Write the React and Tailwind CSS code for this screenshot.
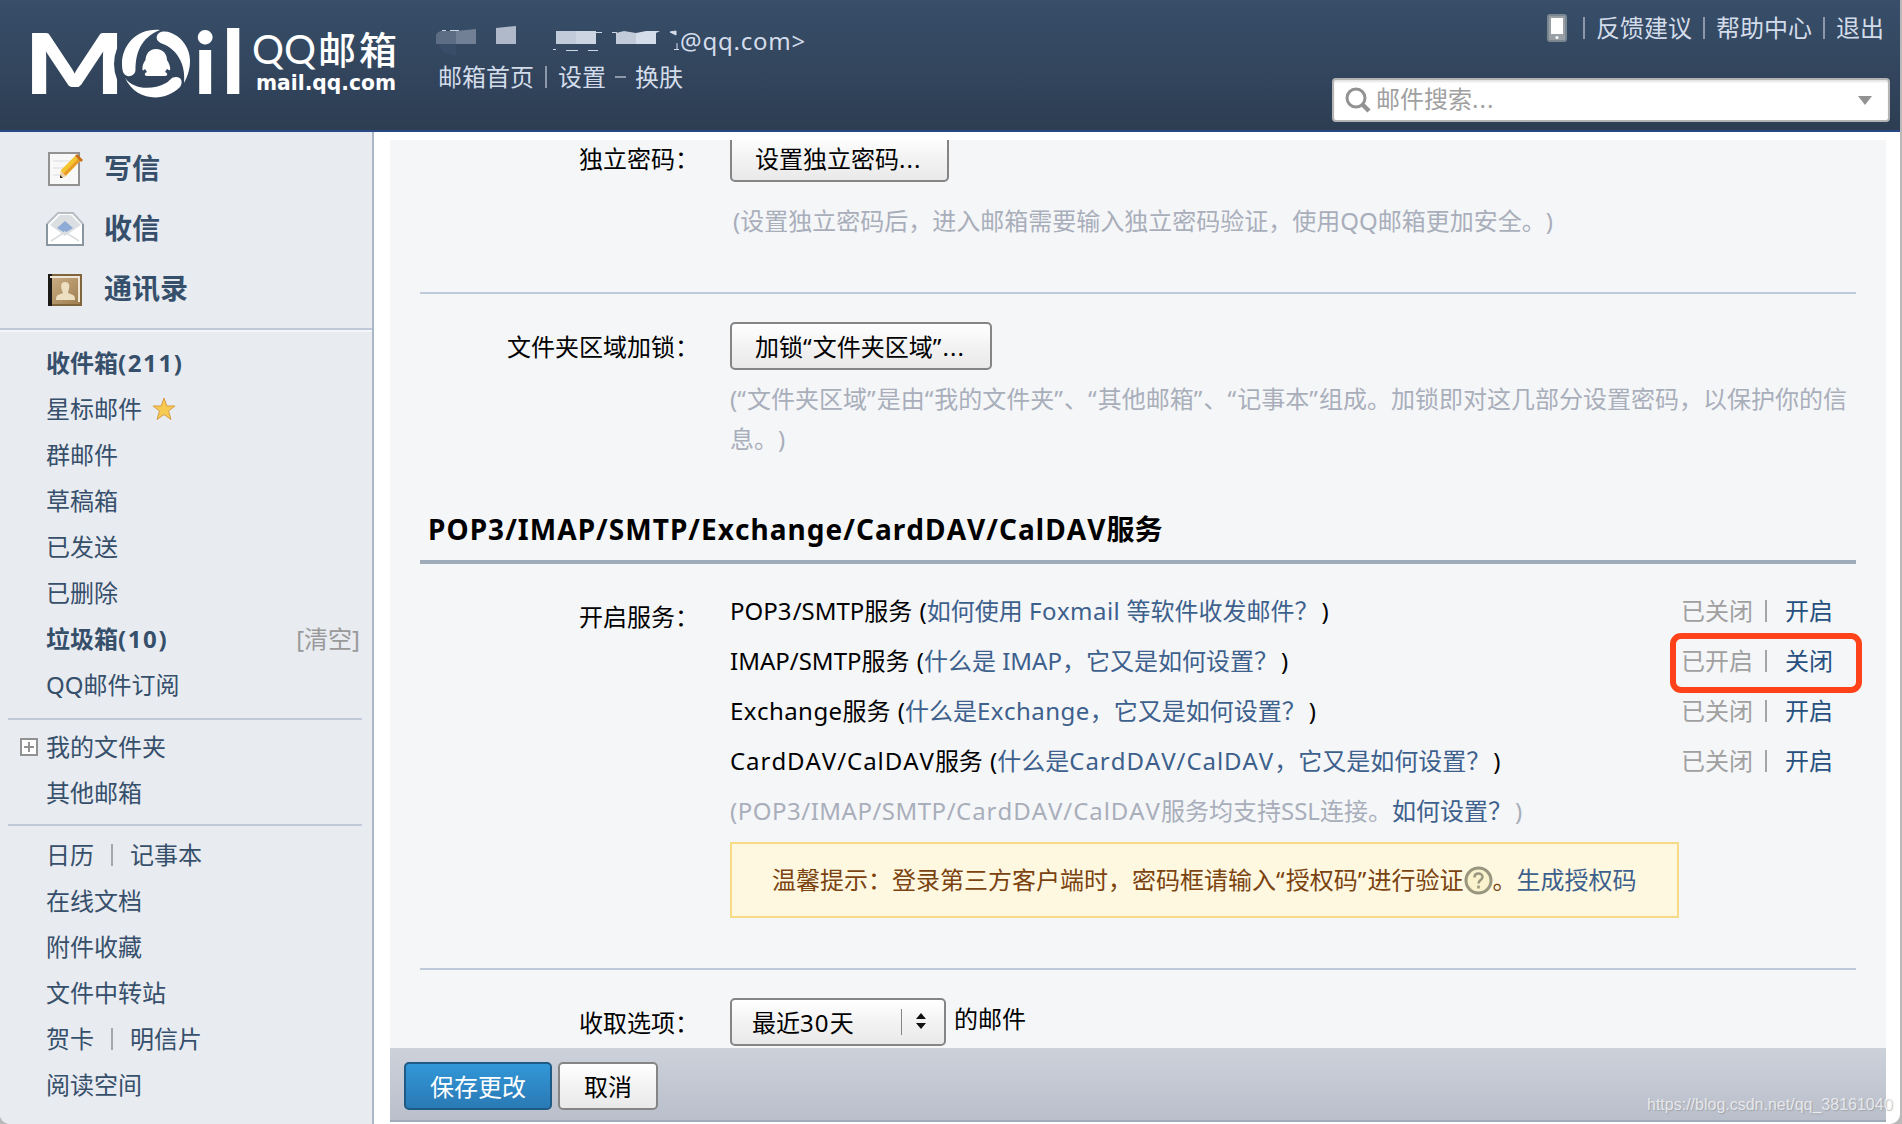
import { Fragment } from 'react';

const FONT = 'font-["Noto_Sans","Noto_Sans_CJK_SC",sans-serif] [font-kerning:none] [text-spacing-trim:space-all]';
const BTN = 'h-12 flex-none box-border flex items-center pt-0.5 border-2 border-[#858585] rounded-[5px] bg-linear-to-b from-white via-[#f3f3f3] via-50% to-[#e9e9e9] text-black whitespace-pre';

const SERVICES = [
  { name: 'POP3/SMTP服务', link: '如何使用 Foxmail 等软件收发邮件？', on: false },
  { name: 'IMAP/SMTP服务', link: '什么是 IMAP，它又是如何设置？', on: true },
  { name: 'Exchange服务', link: '什么是Exchange，它又是如何设置？', on: false },
  { name: 'CardDAV/CalDAV服务', link: '什么是CardDAV/CalDAV，它又是如何设置？', on: false },
];

// opens up latin runs and punctuation a little, leaves the Chinese glyphs on their grid
const T = ({ children }) => children.split(/([.“”0-9]+|CardDAV\/CalDAV|Exchange|Foxmail)/).map((s, i) => {
  if (/^[.“”0-9]/.test(s)) return <span key={i} className="tracking-[1.1px]">{s}</span>;
  if (s === 'CardDAV/CalDAV') return <span key={i} className="tracking-[0.95px]">{s}</span>;
  if (s === 'Exchange' || s === 'Foxmail') return <span key={i} className="tracking-[0.45px]">{s}</span>;
  return <Fragment key={i}>{s}</Fragment>;
});

const Logo = () => (
  <svg className="block flex-none" width="410" height="130" viewBox="0 0 410 130" fill="#fff">
    <defs>
      <mask id="cut">
        <rect width="410" height="130" fill="#fff"/>
        <circle cx="156" cy="64" r="42" fill="#000"/>
      </mask>
    </defs>
    <g mask="url(#cut)">
      <text x="0" y="0" transform="translate(24 94) scale(1.280 1)" fontFamily="Lato" fontWeight="900" fontSize="83">M</text>
    </g>
    <path d="M160 30C137 28 122 45 122 64C122 68 122.500 71 123.500 73C126 78 135 77 135.500 70C135.500 54 140 38 160 30Z"/>
    <path d="M159 33C164 30 171 32 177 36C193 48 193 67 184 83C186 63 176 49 163 44C156 42 155 36 159 33Z"/>
    <path d="M125 78C133 89 151 91 166 83C171 80 171 77 176 77C182 77 183 83 180 87C164 103 136 101 125 78Z"/>
    <path d="M156 49C163 49 167 54 167 60C169 63 171 68 170 70C169 71 168 69 167 69L165 72C168 73 168 76 165 76H147C144 76 144 73 147 72L145 69C144 70 143 71 142.500 70C142 67 143 63 145.500 60C146 54 149 49 156 49Z"/>
    <text x="194" y="94" fontFamily="Lato" fontWeight="900" fontSize="86">i</text>
    <text x="222" y="94" fontFamily="Lato" fontWeight="900" fontSize="88">l</text>
    <text x="252" y="64" fontFamily="Lato" fontSize="40" textLength="64" lengthAdjust="spacingAndGlyphs">QQ</text>
    <text x="318" y="64" fontFamily="Noto Sans CJK SC" fontWeight="500" fontSize="38" textLength="79">邮箱</text>
    <text x="256" y="90" fontFamily="DejaVu Sans" fontWeight="700" fontSize="22" textLength="140" lengthAdjust="spacingAndGlyphs">mail.qq.com</text>
  </svg>
);

// blurred-out nickname and account number
const HiddenName = () => (
  <svg className="block flex-none" width="243" height="40" viewBox="0 0 243 40">
    <path d="M0 10Q1 7 5 6H20V19H0V10Z" fill="#5d6d84"/>
    <path d="M20 6L40 4V19H20Z" fill="#718094"/>
    <path d="M2 19H20V31L8 28Z" fill="#3a4d68"/>
    <path d="M60 3L80 1V19H60Z" fill="#afb9c9"/>
    <path d="M120 6H140V19H120Z" fill="#c2cbd9"/>
    <path d="M140 6H160V19H140Z" fill="#cdd4e2"/>
    <path d="M6 5.500H10M14 5.500H23M160 7.500H166M117 24.500H120M130 25.500H142M152 25.500H162M176 7.500H181" stroke="#cdd4e2" strokeWidth="1"/>
    <path d="M180 8L188 6L200 8V19H180Z" fill="#c2cbd9"/>
    <path d="M200 8L210 6H224L220 8V19H200Z" fill="#d5dcea"/>
    <path d="M234 7L240 6V10ZM238 24.500H243M241 18V24" stroke="#d5dcea" fill="#d5dcea" strokeWidth="1"/>
  </svg>
);

const ComposeIcon = () => (
  <svg width="38" height="36" viewBox="0 0 38 36">
    <rect x="3" y="3" width="30" height="32" fill="#f8f8f8" stroke="#929292" strokeWidth="2"/>
    <path d="M7 11H25M7 18H21M7 25H18" stroke="#d8dbdf" strokeWidth="1"/>
    <path d="M14 28L15 20L29 6L34 11L20 26Z" fill="#f4c531"/>
    <path d="M19 26L34 11L32 9L17 24Z" fill="#ea9928"/>
    <path d="M14 28L15 21L20 26Z" fill="#ecd0ae"/>
    <path d="M14 28V25L17 28Z" fill="#352a20"/>
    <path d="M31 4L37 10L35 12L29 6Z" fill="#c66e13"/>
  </svg>
);

const InboxIcon = () => (
  <svg className="mt-0.5" width="38" height="36" viewBox="0 0 38 36">
    <path d="M1 13L12 2H27L37 13V34H1Z" fill="#fff" stroke="#b9bec5" strokeWidth="2"/>
    <path d="M1 13V34H37V13" fill="none" stroke="#89959f" strokeWidth="2"/>
    <path d="M4 14L14 4H25L35 14L19 25Z" fill="#dcdfe1"/>
    <path d="M11 17L19 10L27 17L19 22Z" fill="#8eabd5"/>
    <path d="M5 30L19 21L33 30" fill="none" stroke="#dadde0" strokeWidth="1.500"/>
  </svg>
);

const ContactsIcon = () => (
  <svg className="mt-1" width="36" height="34" viewBox="0 0 36 34">
    <defs>
      <linearGradient id="book" x1="0" y1="0" x2="1" y2="1">
        <stop offset="0" stopColor="#cfb188"/>
        <stop offset="1" stopColor="#9c7c4e"/>
      </linearGradient>
    </defs>
    <rect x="2" y="2" width="32" height="30" fill="url(#book)" stroke="#80653d" strokeWidth="2"/>
    <rect x="1" y="1" width="4" height="32" fill="#1b1a18"/>
    <path d="M3 4H32V29" fill="none" stroke="#efe6d8" strokeWidth="2"/>
    <path d="M18 9C22 9 23 12 22 16C21.500 18 21 19 21 20L26 22C28 23 28 25 28 27H9C9 25 9 23 11 22L16 20C16 19 15 18 14.500 16C13.500 12 14.500 9 18 9Z" fill="#ecdfc2"/>
  </svg>
);

const Folder = ({ children, bold, right }) => (
  <div className={`h-[46px] pl-[46px] pr-3 flex items-center justify-between whitespace-pre ${bold ? 'font-bold' : ''}`}>
    <span className="flex items-center">{children}</span>
    {right && <span className="font-normal text-[#9a9a9a]">{right}</span>}
  </div>
);

const Pair = ({ a, b }) => (
  <Folder>{a}<span className="w-[36px] flex justify-center"><i className="w-0.5 h-[22px] bg-[#a5a7aa]"/></span>{b}</Folder>
);

const Bar = ({ className }) => <i className={`flex-none w-0.5 h-[22px] bg-[#8d99aa] ${className}`}/>;

const Label = ({ children, className = '' }) => (
  <div className={`w-[309px] mr-[31px] flex-none flex justify-end whitespace-nowrap ${className}`}>{children}</div>
);

function Header() {
  return (
    <header className="h-[132px] flex border-b-2 border-[#2a4886] bg-linear-to-b from-[#384e69] to-[#2d3e53] text-[#d3dcea]">
      <Logo/>
      <div className="flex-1 pt-6 pl-[26px]">
        <div className="flex h-9 items-center">
          <div className="h-9 pt-px"><HiddenName/></div>
          <span className="tracking-[0.8px] -mt-0.5 ml-px">@qq.com&gt;</span>
        </div>
        <div className="flex h-9 items-center pl-0.5 -mt-px">
          邮箱首页<Bar className="ml-[11px] mr-[11px]"/>设置<i className="w-[11px] h-0.5 mx-[9px] bg-[#8d99aa]"/>换肤
        </div>
      </div>
      <div className="w-[558px] flex-none mr-2.5 flex flex-col">
        <div className="h-[54px] pt-px pr-1.5 flex items-center justify-end">
          <svg className="mr-4" width="20" height="28" viewBox="0 0 20 28">
            <rect x="1" y="1" width="18" height="26" rx="2" fill="#989fa5" stroke="#7a8791" strokeWidth="2"/>
            <rect x="4" y="4" width="12" height="16" fill="#fff"/>
            <circle cx="10" cy="23.500" r="1.500" fill="#fff"/>
          </svg>
          <Bar className="mr-[11px]"/>反馈建议<Bar className="ml-[11px] mr-[11px]"/>帮助中心<Bar className="ml-[11px] mr-[11px]"/>退出
        </div>
        <div className="mt-6 h-[44px] border-2 border-[#b4b4b4] rounded-[4px] bg-white shadow-[inset_0_2px_2px_#e4e4e4] flex items-center text-[#a0a0a0]">
          <svg className="ml-[11px] mr-[5px]" width="26" height="26" viewBox="0 0 26 26" fill="none" stroke="#929292">
            <circle cx="11" cy="11" r="9" strokeWidth="3"/>
            <path d="M17 17L24 24" strokeWidth="4.500"/>
          </svg>
          <span className="flex-1 -mt-0.5"><T>邮件搜索...</T></span>
          <svg className="mr-4" width="14" height="9" viewBox="0 0 14 9"><path d="M0 0H14L7 9Z" fill="#929292"/></svg>
        </div>
      </div>
    </header>
  );
}

function Sidebar() {
  return (
    <aside className="w-[374px] flex-none bg-[#e8ebf0] border-r-2 border-[#adb8c6] text-[#364f6b]">
      <div className="h-[198px] pt-1.5 border-b-2 border-[#bfc9da] font-bold text-[28px]">
        <div className="h-[60px] flex items-center pl-[46px] gap-5"><ComposeIcon/>写信</div>
        <div className="h-[60px] flex items-center pl-[46px] gap-5"><InboxIcon/>收信</div>
        <div className="h-[60px] flex items-center pl-[47px] gap-[21px]"><ContactsIcon/>通讯录</div>
      </div>
      <div className="border-t-2 border-[#f4f6f9] pt-2">
        <Folder bold>收件箱<span className="tracking-[1.600px]">(211)</span></Folder>
        <Folder>
          星标邮件
          <svg className="ml-[10px]" width="24" height="24" viewBox="0 0 24 24">
            <path d="M12 1L14.800 9H23L16.500 14L19 22.500L12 17.500L5 22.500L7.500 14L1 9H9.200Z" fill="#f7cb52" stroke="#d89b45"/>
          </svg>
        </Folder>
        <Folder>群邮件</Folder>
        <Folder>草稿箱</Folder>
        <Folder>已发送</Folder>
        <Folder>已删除</Folder>
        <Folder bold right="[清空]">垃圾箱<span className="tracking-[1.600px]">(10)</span></Folder>
        <Folder>QQ邮件订阅</Folder>
      </div>
      <div className="mt-[10px] ml-2 mr-2.5 h-0.5 bg-[#bfc9da]"/>
      <div className="pt-1">
        <Folder>
          <svg className="-ml-[26px] mr-2" width="18" height="18" viewBox="0 0 18 18">
            <rect x="1" y="1" width="16" height="16" fill="#fff" stroke="#929292" strokeWidth="2"/>
            <path d="M4 9H14M9 4V14" stroke="#929292" strokeWidth="2"/>
          </svg>
          我的文件夹
        </Folder>
        <Folder>其他邮箱</Folder>
      </div>
      <div className="mt-2 ml-2 mr-2.5 h-0.5 bg-[#bfc9da]"/>
      <div className="pt-1.5">
        <Pair a="日历" b="记事本"/>
        <Folder>在线文档</Folder>
        <Folder>附件收藏</Folder>
        <Folder>文件中转站</Folder>
        <Pair a="贺卡" b="明信片"/>
        <Folder>阅读空间</Folder>
      </div>
    </aside>
  );
}

function ServiceRow({ name, link, on }) {
  return (
    <div className="h-[50px] flex items-center justify-between pr-[23px] whitespace-pre">
      <span><T>{name}</T><span className="ml-px"> (</span><a className="text-[#3d608c]"><T>{link}</T></a><span className="ml-[3px]">)</span></span>
      <span className="relative flex items-center text-[#a0a0a0]">
        {on ? '已开启' : '已关闭'}
        <i className="w-0.5 h-[22px] ml-3 mr-[18px] bg-[#a5a5a5]"/>
        <a className="text-[#28507f]">{on ? '关闭' : '开启'}</a>
        {on && <i className="absolute -left-[11px] -top-[10px] w-[192px] h-[60px] border-[6px] border-[#ff421a] rounded-[11px]"/>}
      </span>
    </div>
  );
}

export default function App() {
  return (
    <div className="w-[1902px] h-[1124px] overflow-hidden bg-[#b9b9b9]">
      <div className={`relative w-[1900px] h-[1124px] overflow-hidden rounded-b-[10px] bg-white text-[24px] leading-[36px] text-black ${FONT}`}>
        <Header/>
        <div className="flex h-[992px]">
          <Sidebar/>
          <main className="ml-4 mt-2 w-[1496px] h-[982px] bg-[#f5f6f8] flex flex-col">
            <div className="h-[908px] overflow-hidden pl-[30px] pr-[30px]">
              <div className="flex -ml-[30px] -mt-1.5">
                <Label className="pt-[7px]">独立密码：</Label>
                <button className={`${BTN} w-[219px] pl-[23px]`}><T>设置独立密码...</T></button>
              </div>
              <div className="mt-[19px] h-10 leading-10 ml-[313px] text-[#a9aebb] whitespace-nowrap">(设置独立密码后，进入邮箱需要输入独立密码验证，使用QQ邮箱更加安全。)</div>
              <div className="mt-[51px] h-0.5 bg-[#bfc9da]"/>

              <div className="flex -ml-[30px] mt-7">
                <Label className="pt-[7px]">文件夹区域加锁：</Label>
                <button className={`${BTN} w-[262px] pl-[23px]`}><T>加锁“文件夹区域”...</T></button>
              </div>
              <div className="mt-[9px] h-20 leading-10 ml-[310px] text-[#a9aebb] whitespace-nowrap">
                <T>(“文件夹区域”是由“我的文件夹”、“其他邮箱”、“记事本”组成。加锁即对这几部分设置密码，以保护你的信</T><br/>息。)
              </div>

              <h2 className="mt-[50px] h-10 leading-10 pl-2 text-[28px] font-bold whitespace-nowrap"><span className="tracking-[1.05px]">POP3/IMAP/SMTP/Exchange/CardDAV/CalDAV</span>服务</h2>
              <div className="mt-[11px] h-1 bg-[#a0abb9]"/>

              <div className="flex -ml-[30px] mt-[22px]">
                <Label className="pt-[13px]">开启服务：</Label>
                <div className="flex-1">
                  {SERVICES.map((s) => <ServiceRow key={s.name} {...s}/>)}
                  <div className="h-[50px] flex items-center whitespace-pre text-[#a9aebb]">
                    <span><span className="tracking-[0.5px]">(POP3/IMAP/SMTP/</span><T>CardDAV/CalDAV服务均支持SSL连接。</T><a className="text-[#3d608c]">如何设置？</a><span className="ml-[3px]">)</span></span>
                  </div>
                  <div className="mt-[6px] w-[949px] h-[76px] box-border border-2 border-[#f8db85] bg-[#fff8e1] pl-10 flex items-center text-[#7a430f] whitespace-pre">
                    <span className="-mt-px">温馨提示：登录第三方客户端时，密码框请输入<T>“授权码”</T>进行验证</span>
                    <svg className="ml-px" width="29" height="29" viewBox="0 0 29 29" fill="none">
                      <circle cx="14.500" cy="14.500" r="12.500" stroke="#98967f" strokeWidth="3" fill="#faf2cc"/>
                      <path d="M10.500 11.500C10.500 6 18.500 6.500 18.500 11C18.500 14 14.500 14 14.500 17.500M14.500 19.500V22.500" stroke="#98967f" strokeWidth="2.500"/>
                    </svg>
                    <span className="-ml-px -mt-px">。<a className="text-[#3d608c]">生成授权码</a></span>
                  </div>
                </div>
              </div>
              <div className="mt-[50px] h-0.5 bg-[#bfc9da]"/>

              <div className="flex -ml-[30px] mt-7">
                <Label className="pt-[7px]">收取选项：</Label>
                <div className={`${BTN} w-[216px] pl-5`}>
                  <span className="w-[149px]"><T>最近30天</T></span>
                  <i className="w-px h-[26px] -mt-0.5 bg-[#858585] mr-[14px]"/>
                  <svg className="-mt-1" width="10" height="16" viewBox="0 0 10 16"><path d="M0 6L5 0L10 6ZM0 10L5 16L10 10Z" fill="#111"/></svg>
                </div>
                <span className="ml-2 pt-[3px]">的邮件</span>
              </div>
            </div>
            <div className="h-[74px] box-border border-b-2 border-[#a0abb9] bg-linear-to-b from-[#cdd1da] to-[#b9bfcb] flex pt-3.5 pl-3.5 gap-1.5">
              <button className="h-12 w-[148px] pt-0.5 border-2 border-[#1e5a86] rounded-[5px] bg-linear-to-b from-[#3297d8] to-[#2a7ab4] text-white">保存更改</button>
              <button className={`${BTN} w-[100px] justify-center`}>取消</button>
            </div>
          </main>
        </div>
        <div className='absolute left-[1647px] top-[1094px] text-[16px] leading-[22px] text-white/70 whitespace-nowrap font-["Liberation_Sans",sans-serif] [text-shadow:1px_1px_1px_#8888]'>https://blog.csdn.net/qq_38161040</div>
      </div>
    </div>
  );
}
